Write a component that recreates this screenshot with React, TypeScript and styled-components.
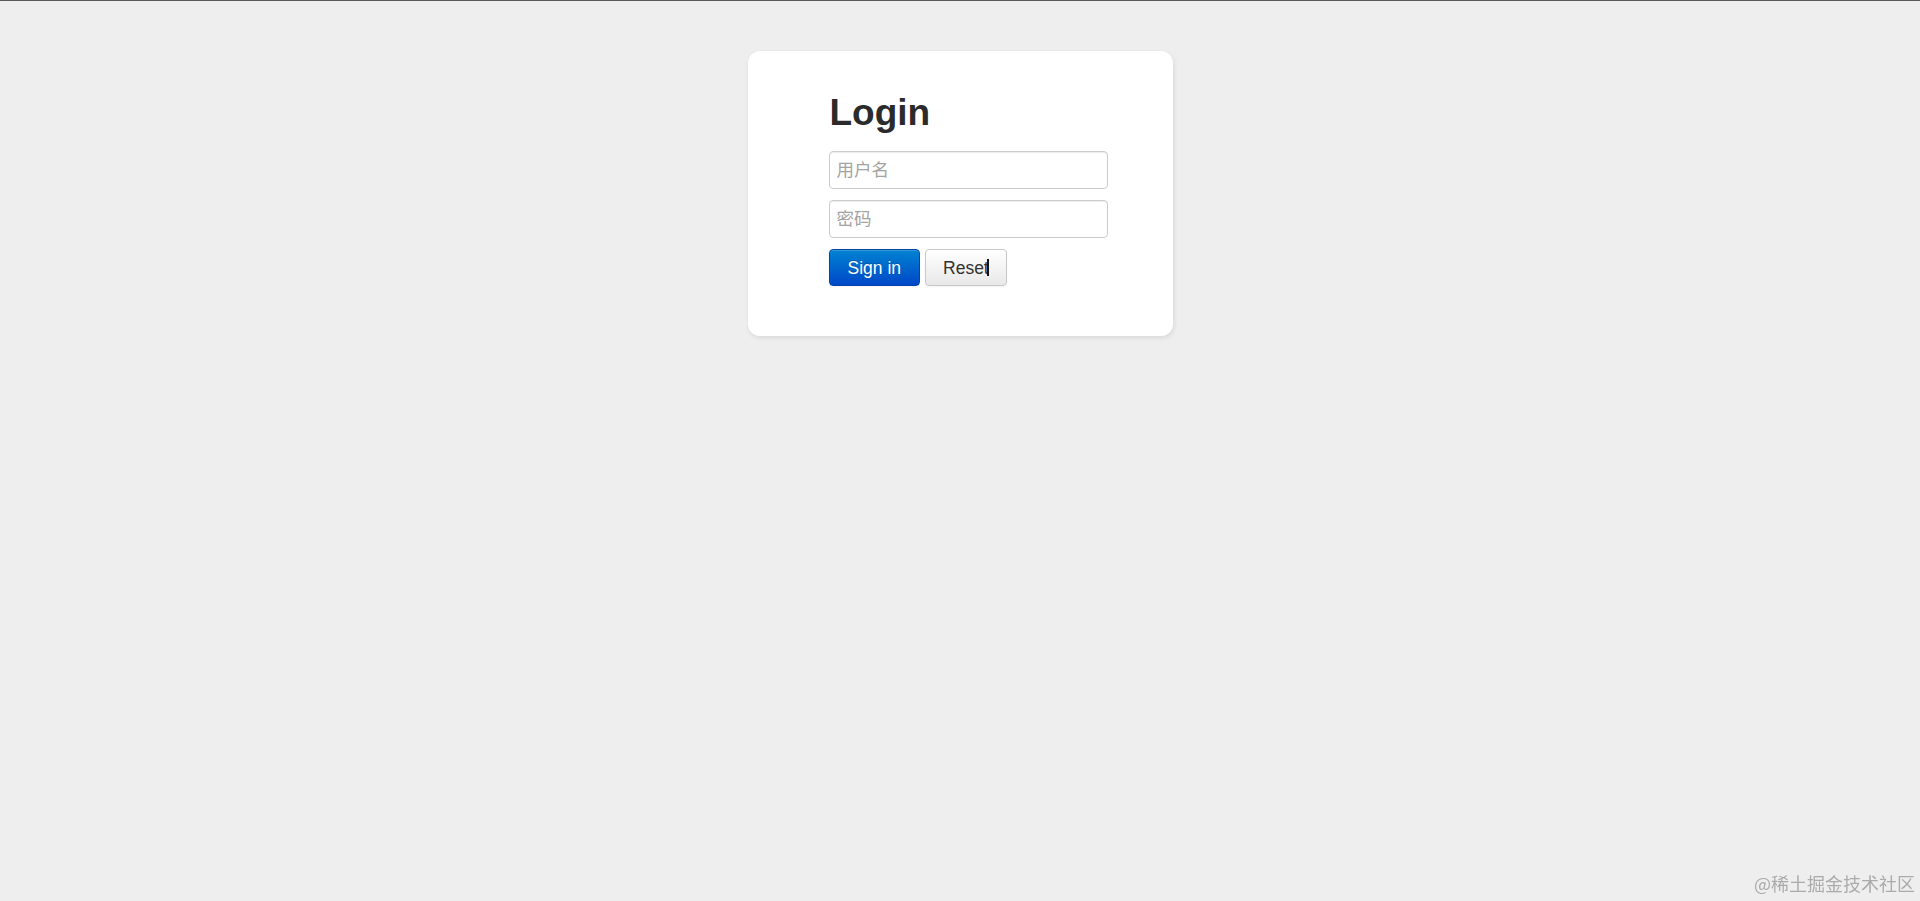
import React from "react";
import styled, { createGlobalStyle } from "styled-components";

const GlobalStyle = createGlobalStyle`
  html, body {
    margin: 0;
    padding: 0;
    background: #eeeeee;
  }
  body {
    font-family: "Liberation Sans", Arial, "Noto Sans CJK SC", sans-serif;
    color: #333333;
  }
  * { box-sizing: border-box; }
`;

const Page = styled.div`
  min-height: 100vh;
  border-top: 1px solid #595959;
  padding-top: 50px;
  display: flex;
  flex-direction: column;
  align-items: center;
`;

const Card = styled.div`
  width: 425px;
  height: 285px;
  background: #ffffff;
  border-radius: 12px;
  box-shadow: 1px 2px 5px rgba(0, 0, 0, 0.09);
  padding: 42px 0 0 81px;
  display: flex;
  flex-direction: column;
`;

const Title = styled.h1`
  margin: 0 0 18px 1px;
  font-family: "Liberation Sans", Arial, sans-serif;
  font-size: 37px;
  line-height: 40px;
  font-weight: bold;
  color: #2b2b2b;
`;

const Form = styled.form`
  display: flex;
  flex-direction: column;
  gap: 11px;
`;

const Input = styled.input`
  width: 279px;
  height: 38px;
  margin: 0;
  padding: 0 7px;
  border: 1px solid #cccccc;
  border-radius: 4px;
  background: #ffffff;
  box-shadow: inset 0 1px 1px rgba(0, 0, 0, 0.075);
  font-family: "Liberation Sans", Arial, "Noto Sans CJK SC", sans-serif;
  font-size: 17.5px;
  color: #555555;
  outline: none;
  &::placeholder {
    color: #a3a3a3;
  }
`;

const Actions = styled.div`
  display: flex;
  gap: 5px;
`;

const Button = styled.button<{ $primary?: boolean }>`
  position: relative;
  height: 37px;
  margin: 0;
  padding: 0 ${(p) => (p.$primary ? "18px" : "17px")};
  border-radius: 4px;
  font-family: "Liberation Sans", Arial, sans-serif;
  font-size: 17.5px;
  line-height: 20px;
  cursor: pointer;
  border: 1px solid ${(p) => (p.$primary ? "#0044aa" : "#c8c8c8")};
  color: ${(p) => (p.$primary ? "#ffffff" : "#333333")};
  background: ${(p) =>
    p.$primary
      ? "linear-gradient(to bottom, #0083d2, #0048c8)"
      : "linear-gradient(to bottom, #ffffff, #e8e8e8)"};
  text-shadow: ${(p) => (p.$primary ? "0 -1px 0 rgba(0,0,0,0.2)" : "none")};
  box-shadow: inset 0 1px 0 rgba(255, 255, 255, 0.2), 0 1px 2px rgba(0, 0, 0, 0.05);
`;

const Caret = styled.span`
  position: absolute;
  left: 61px;
  top: 9px;
  width: 2px;
  height: 17px;
  background: #111111;
`;

const Watermark = styled.div`
  position: fixed;
  right: 5px;
  bottom: 8px;
  font-family: "Noto Sans CJK SC", sans-serif;
  font-size: 18px;
  line-height: 20px;
  color: #ababab;
`;

export default function App() {
  return (
    <>
      <GlobalStyle />
      <Page>
        <Card>
          <Title>Login</Title>
          <Form onSubmit={(e) => e.preventDefault()}>
            <Input type="text" placeholder="用户名" />
            <Input type="password" placeholder="密码" />
            <Actions>
              <Button $primary type="submit">Sign in</Button>
              <Button type="reset">
                Reset
                <Caret />
              </Button>
            </Actions>
          </Form>
        </Card>
      </Page>
      <Watermark>@稀土掘金技术社区</Watermark>
    </>
  );
}
